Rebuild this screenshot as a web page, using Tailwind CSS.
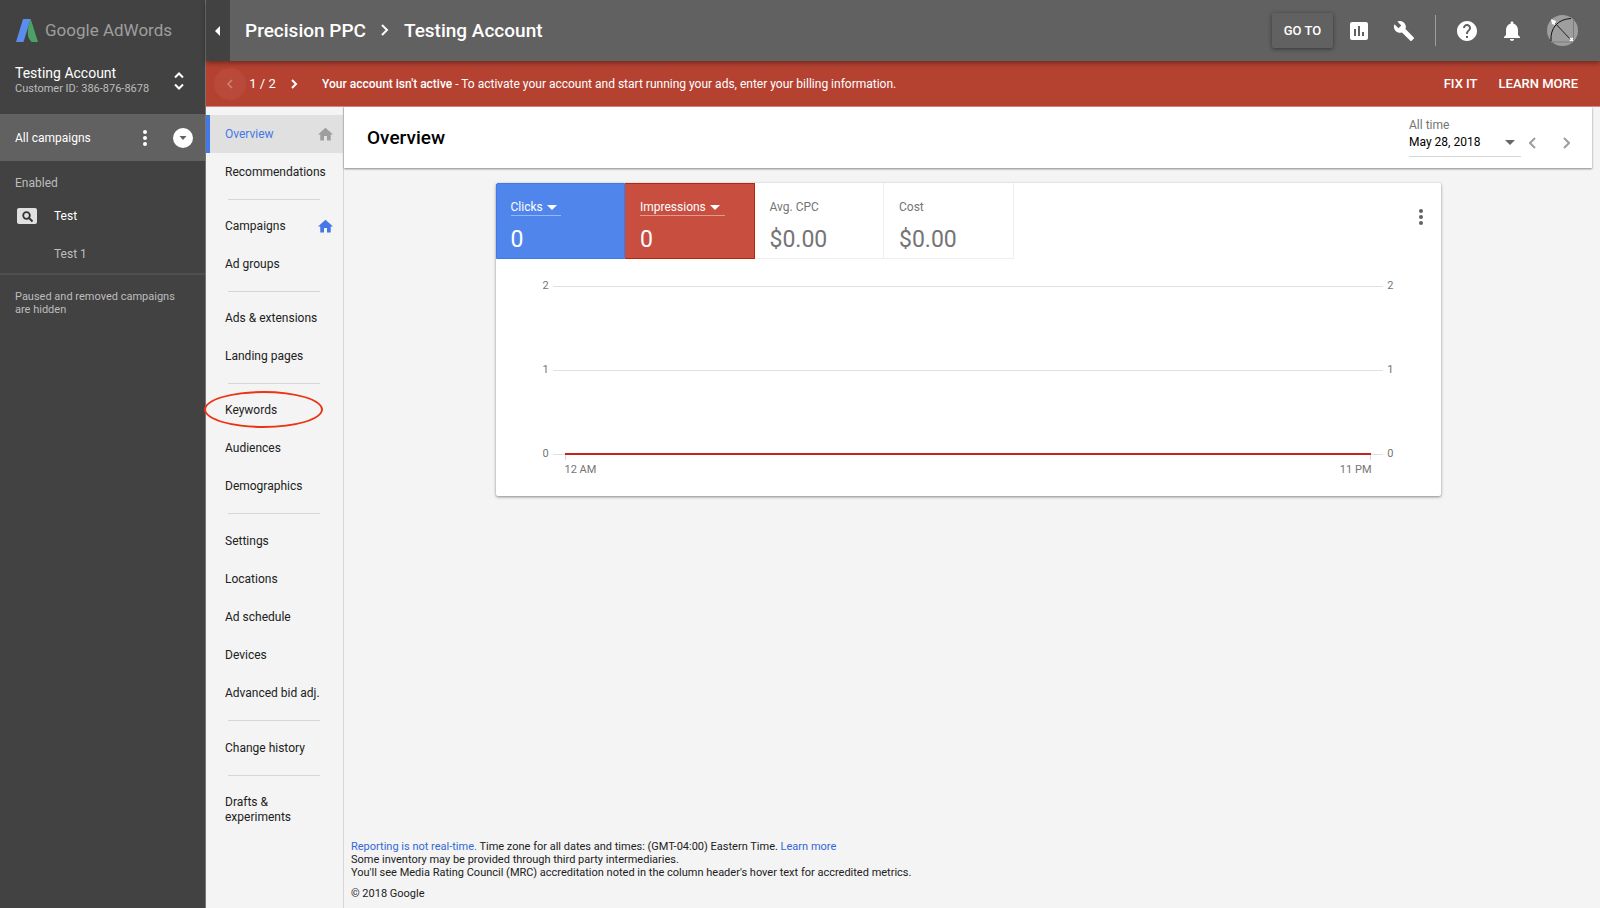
<!DOCTYPE html>
<html lang="en">
<head>
    <meta charset="UTF-8">
    <meta name="viewport" content="width=device-width, initial-scale=1.0">
    <script src="https://cdn.jsdelivr.net/npm/@tailwindcss/browser@4"></script>
    <title>Overview - Testing Account - Google AdWords</title>
</head>
<body class="flex min-h-screen bg-[#f4f4f4] font-['Roboto',sans-serif] text-xs text-[#212121]">

    <!-- Campaign sidebar -->
    <aside class="w-[206px] shrink-0 bg-[#424242] text-xs text-[#bdbdbd] border-r border-[#757575]">
        <a href="#" class="flex items-center gap-[7px] h-[61px] pl-4 text-[17px] text-[#9e9e9e]">
            <svg class="w-[22px] h-[23px]" viewBox="0 0 22 23" aria-hidden="true">
                <path d="M7 0h7.700L7.500 23H0z" fill="#5b8def"/>
                <path d="M12.500 7L14.700 0 22 23h-6.500q-5.500-5-3-16z" fill="#4ca167"/>
            </svg>
            <span>Google AdWords</span>
        </a>
        <div class="flex items-center justify-between h-[53px] pl-[15px] pr-5 pb-[14px]">
            <div>
                <div class="text-sm leading-[17px] text-white">Testing Account</div>
                <div class="text-[11px] leading-[14px]">Customer ID: 386-876-8678</div>
            </div>
            <button type="button" aria-label="Switch account">
                <svg class="w-3 h-[18px]" viewBox="0 0 12 18" fill="none" stroke="#fff" stroke-width="2"><path d="M2 5.500l4-4 4 4M2 12.500l4 4 4-4"/></svg>
            </button>
        </div>
        <div class="flex items-center h-[47px] pl-[15px] pr-3 bg-[#616161] text-white">
            <span class="flex-1">All campaigns</span>
            <button type="button" aria-label="More" class="mr-[26px]">
                <svg class="w-1 h-4" viewBox="0 0 4 16" fill="#fff"><circle cx="2" cy="2" r="2"/><circle cx="2" cy="8" r="2"/><circle cx="2" cy="14" r="2"/></svg>
            </button>
            <button type="button" aria-label="Filter campaigns">
                <svg class="w-5 h-5" viewBox="0 0 20 20"><circle cx="10" cy="10" r="10" fill="#fff"/><path d="M6.500 8h7L10 12z" fill="#616161"/></svg>
            </button>
        </div>
        <div class="pl-[15px] h-9 pt-[14px]">Enabled</div>
        <a href="#" class="flex items-center h-[38px] pl-[17px] gap-[17px] text-white">
            <svg class="w-5 h-4" viewBox="0 0 20 16"><rect width="20" height="16" rx="2" fill="#e0e0e0"/><g fill="none" stroke="#333"><circle cx="9.500" cy="7.500" r="3.300" stroke-width="1.800"/><path d="M12 10l3.500 3.500" stroke-width="2"/></g></svg>
            Test
        </a>
        <a href="#" class="flex items-center h-[38px] pl-[54px]">Test 1</a>
        <p class="border-t-2 border-[#4f4f4f] pl-[15px] pr-5 pt-[15px] text-[11px] leading-[13px]">Paused and removed campaigns are hidden</p>
    </aside>

    <div class="flex flex-col flex-1 min-w-0">
        <!-- Top bar -->
        <header class="relative z-10 flex items-center h-[61px] pr-[22px] bg-[#616161] text-white shadow-[0_2px_5px_rgba(0,0,0,0.4)]">
            <button type="button" aria-label="Collapse menu" class="flex items-center justify-center w-6 h-full pr-px bg-[#424242]">
                <svg class="w-[5px] h-[10px]" viewBox="0 0 5 10" fill="#fff"><path d="M5 0v10L0 5z"/></svg>
            </button>
            <nav class="flex items-center flex-1 pl-[15px] text-[19px] font-medium">
                <a href="#">Precision PPC</a>
                <svg class="w-2 h-3 mx-[15px]" viewBox="0 0 8 12" fill="none" stroke="#fff" stroke-width="2"><path d="M1 1l5 5-5 5"/></svg>
                <a href="#">Testing Account</a>
            </nav>
            <button type="button" class="h-[35px] w-[61px] rounded-xs text-[13px] font-medium shadow-[0_1px_4px_rgba(0,0,0,0.45)]">GO TO</button>
            <button type="button" aria-label="Reports" class="ml-[14px]">
                <svg class="w-6 h-6" viewBox="0 0 24 24" fill="#fff"><path d="M19 3H5c-1.100 0-2 .9-2 2v14c0 1.100.9 2 2 2h14c1.100 0 2-.9 2-2V5c0-1.100-.9-2-2-2zM9 17H7v-7h2v7zm4 0h-2V7h2v10zm4 0h-2v-4h2v4z"/></svg>
            </button>
            <button type="button" aria-label="Tools" class="ml-[22px]">
                <svg class="w-[22px] h-[22px]" viewBox="0 0 24 24" fill="#fff"><path d="M22.700 19l-9.100-9.100c.9-2.300.4-5-1.500-6.900-2-2-5-2.400-7.400-1.300L9 6 6 9 1.600 4.700C.4 7.100.9 10.100 2.900 12.100c1.900 1.900 4.600 2.400 6.900 1.500l9.100 9.100c.4.4 1 .4 1.400 0l2.300-2.300c.5-.4.5-1.100.1-1.400z"/></svg>
            </button>
            <div class="w-px h-[31px] ml-5 bg-[#9e9e9e]"></div>
            <button type="button" aria-label="Help" class="ml-[19px]">
                <svg class="w-6 h-6" viewBox="0 0 24 24" fill="#fff"><path d="M12 2C6.480 2 2 6.480 2 12s4.480 10 10 10 10-4.480 10-10S17.520 2 12 2zm1 17h-2v-2h2v2zm2.070-7.750l-.9.920C13.450 12.900 13 13.500 13 15h-2v-.5c0-1.100.45-2.100 1.170-2.830l1.240-1.260c.37-.36.59-.86.59-1.410 0-1.100-.9-2-2-2s-2 .9-2 2H8c0-2.210 1.790-4 4-4s4 1.790 4 4c0 .88-.36 1.680-.93 2.250z"/></svg>
            </button>
            <button type="button" aria-label="Notifications" class="ml-[21px]">
                <svg class="w-6 h-6" viewBox="0 0 24 24" fill="#fff"><path d="M12 22c1.100 0 2-.9 2-2h-4c0 1.100.9 2 2 2zm6-6v-5c0-3.070-1.640-5.640-4.500-6.320V4c0-.83-.67-1.500-1.500-1.500s-1.500.67-1.500 1.500v.68C7.630 5.360 6 7.920 6 11v5l-2 2v1h16v-1l-2-2z"/></svg>
            </button>
            <button type="button" aria-label="Account" class="ml-[23px]">
                <svg class="w-[31px] h-[31px]" viewBox="0 0 31 31">
                    <circle cx="15.500" cy="15.500" r="15.500" fill="#9e9e9e"/>
                    <path d="M26.500 5v22M4 27h22" stroke="#7c7c7c" fill="none"/>
                    <path d="M4 26C3 13 11 4 24 3.500" stroke="#111" fill="none"/>
                    <path d="M7 7l17 18" stroke="#222" fill="none"/>
                    <path d="M4 4l5 2-1 4-3-1z" fill="#fff"/>
                    <path d="M23 23l3 3m0-3l-3 3" stroke="#fff" stroke-width="1.500"/>
                </svg>
            </button>
        </header>

        <!-- Account alert -->
        <div class="flex items-center h-[46px] pl-2 pr-[22px] bg-[#b54231] text-white border-b border-[#c98b82]">
            <button type="button" aria-label="Previous alert" class="flex items-center justify-center w-8 h-8 rounded-full bg-[#b94a3a]">
                <svg class="w-[6px] h-[10px]" viewBox="0 0 6 10" fill="none" stroke="#d08478" stroke-width="1.500"><path d="M5 1L1 5l4 4"/></svg>
            </button>
            <span class="w-[33px] text-center text-[13px]">1 / 2</span>
            <button type="button" aria-label="Next alert" class="ml-3">
                <svg class="w-[7px] h-[10px]" viewBox="0 0 7 10" fill="none" stroke="#fff" stroke-width="2"><path d="M1 1l4 4-4 4"/></svg>
            </button>
            <p class="flex-1 pl-6"><b class="font-medium">Your account isn't active</b> - To activate your account and start running your ads, enter your billing information.</p>
            <a href="#" class="text-[13px] font-medium">FIX IT</a>
            <a href="#" class="ml-[21px] text-[13px] font-medium">LEARN MORE</a>
        </div>

        <div class="flex flex-1">
            <!-- Page menu -->
            <nav class="w-[138px] shrink-0 pt-2 border-r border-[#d6d6d6]">
                <a href="#" class="flex items-center justify-between h-[38px] pl-[15px] pr-[10px] border-l-4 border-[#4478e6] bg-[#e0e0e0] text-[#4478e6]">
                    Overview
                    <svg class="w-[15px] h-[15px]" viewBox="2 3 20 18" fill="#9e9e9e" aria-hidden="true"><path d="M10 20v-6h4v6h5v-8h3L12 3 2 12h3v8z"/></svg>
                </a>
                <a href="#" class="flex items-center h-[38px] pl-[19px]">Recommendations</a>
                <hr class="mt-2 mb-[7px] ml-[22px] mr-[23px] border-[#d6d6d6]">
                <a href="#" class="flex items-center justify-between h-[38px] pl-[19px] pr-[10px]">
                    Campaigns
                    <svg class="w-[15px] h-[15px]" viewBox="2 3 20 18" fill="#4478e6" aria-hidden="true"><path d="M10 20v-6h4v6h5v-8h3L12 3 2 12h3v8z"/></svg>
                </a>
                <a href="#" class="flex items-center h-[38px] pl-[19px]">Ad groups</a>
                <hr class="mt-2 mb-[7px] ml-[22px] mr-[23px] border-[#d6d6d6]">
                <a href="#" class="flex items-center h-[38px] pl-[19px]">Ads &amp; extensions</a>
                <a href="#" class="flex items-center h-[38px] pl-[19px]">Landing pages</a>
                <hr class="mt-2 mb-[7px] ml-[22px] mr-[23px] border-[#d6d6d6]">
                <a href="#" class="relative flex items-center h-[38px] pl-[19px]">
                    Keywords
                    <span class="absolute top-0 -left-0.5 w-[119px] h-[37px] rounded-[50%] border-2 border-[#ec3312]"></span>
                </a>
                <a href="#" class="flex items-center h-[38px] pl-[19px]">Audiences</a>
                <a href="#" class="flex items-center h-[38px] pl-[19px]">Demographics</a>
                <hr class="my-2 ml-[22px] mr-[23px] border-[#d6d6d6]">
                <a href="#" class="flex items-center h-[38px] pl-[19px]">Settings</a>
                <a href="#" class="flex items-center h-[38px] pl-[19px]">Locations</a>
                <a href="#" class="flex items-center h-[38px] pl-[19px]">Ad schedule</a>
                <a href="#" class="flex items-center h-[38px] pl-[19px]">Devices</a>
                <a href="#" class="flex items-center h-[38px] pl-[19px]">Advanced bid adj.</a>
                <hr class="my-2 ml-[22px] mr-[23px] border-[#d6d6d6]">
                <a href="#" class="flex items-center h-[38px] pl-[19px]">Change history</a>
                <hr class="my-2 ml-[22px] mr-[23px] border-[#d6d6d6]">
                <a href="#" class="block pl-[19px] pr-8 pt-[11px] leading-[15px]">Drafts &amp; experiments</a>
            </nav>

            <main class="flex flex-col flex-1 min-w-0 pr-2">
                <div class="flex items-center h-[61px] pl-[23px] pr-[22px] bg-white shadow-[0_1px_2px_rgba(0,0,0,0.45)]">
                    <h1 class="flex-1 text-[19px] font-medium text-black">Overview</h1>
                    <div class="w-[112px] border-b border-[#d6d6d6]">
                        <div class="leading-[14px] text-[#757575]">All time</div>
                        <button type="button" class="flex items-center justify-between w-full h-6 pr-[6px] pb-1 text-black">
                            May 28, 2018
                            <svg class="w-[10px] h-[5px]" viewBox="0 0 10 5" fill="#666"><path d="M0 0h10L5 5z"/></svg>
                        </button>
                    </div>
                    <button type="button" aria-label="Previous period" class="ml-2 mt-[10px]">
                        <svg class="w-[7px] h-3" viewBox="0 0 7 12" fill="none" stroke="#9e9e9e" stroke-width="2"><path d="M6 1L1 6l5 5"/></svg>
                    </button>
                    <button type="button" aria-label="Next period" class="ml-[27px] mt-[10px]">
                        <svg class="w-[7px] h-3" viewBox="0 0 7 12" fill="none" stroke="#9e9e9e" stroke-width="2"><path d="M1 1l5 5-5 5"/></svg>
                    </button>
                </div>

                <!-- Metrics card -->
                <section class="w-full max-w-[945px] mx-auto mt-[15px] pb-[19px] bg-white rounded-xs text-[#757575] shadow-[0_1px_3px_rgba(0,0,0,0.45)]">
                    <div class="flex items-start justify-between pr-[18px]">
                        <div class="grid grid-cols-4 w-[518px] h-[76px]">
                            <div class="pl-[14px] pt-[15px] rounded-tl-xs border border-[#4079ea] bg-[#5086ec] text-white">
                                <button type="button" class="flex items-center gap-1 h-[17px] w-[50px] border-b border-[#96b6f4]">Clicks
                                    <svg class="w-[10px] h-[5px]" viewBox="0 0 10 5" fill="#fff"><path d="M0 0h10L5 5z"/></svg>
                                </button>
                                <div class="mt-2 text-[23px] leading-8">0</div>
                            </div>
                            <div class="pl-[15px] pt-[15px] border-y border-r border-[#b7260b] bg-[#c84e40] text-white">
                                <button type="button" class="flex items-center gap-1 h-[17px] w-[85px] border-b border-[#e09a92]">Impressions
                                    <svg class="w-[10px] h-[5px]" viewBox="0 0 10 5" fill="#fff"><path d="M0 0h10L5 5z"/></svg>
                                </button>
                                <div class="mt-2 text-[23px] leading-8">0</div>
                            </div>
                            <div class="pl-[15px] pt-4 border-r border-b border-[#eee]">
                                <div class="h-[17px]">Avg. CPC</div>
                                <div class="mt-2 text-[23px] leading-8">$0.00</div>
                            </div>
                            <div class="pl-[15px] pt-4 border-r border-b border-[#eee]">
                                <div class="h-[17px]">Cost</div>
                                <div class="mt-2 text-[23px] leading-8">$0.00</div>
                            </div>
                        </div>
                        <button type="button" aria-label="Card options" class="mt-[26px]">
                            <svg class="w-1 h-4" viewBox="0 0 4 16" fill="#616161"><circle cx="2" cy="2" r="2"/><circle cx="2" cy="8" r="2"/><circle cx="2" cy="14" r="2"/></svg>
                        </button>
                    </div>

                    <div class="px-[47px] pt-5 text-[11px]">
                        <div class="flex flex-col gap-[70px] leading-[14px]">
                            <div class="flex items-center gap-1">
                                <span>2</span><span class="flex-1 h-px bg-[#e0e0e0]"></span><span>2</span>
                            </div>
                            <div class="flex items-center gap-1">
                                <span>1</span><span class="flex-1 h-px bg-[#e0e0e0]"></span><span>1</span>
                            </div>
                            <div class="flex items-center gap-1">
                                <span>0</span>
                                <span class="relative flex-1 h-px bg-[#e0e0e0]">
                                    <span class="absolute top-0 inset-x-3 h-[6px] border-x border-[#d6d6d6]"></span>
                                    <span class="absolute -top-px inset-x-3 h-[2px] bg-[#c5221f]"></span>
                                </span>
                                <span>0</span>
                            </div>
                        </div>
                        <div class="flex justify-between px-[22px] pt-[2px] leading-[14px]">
                            <span>12 AM</span>
                            <span>11 PM</span>
                        </div>
                    </div>
                </section>

                <footer class="mt-auto pl-[7px] pb-2 text-[11px] leading-[13px]">
                    <p><a href="#" class="text-[#3367d6]">Reporting is not real-time.</a> Time zone for all dates and times: (GMT-04:00) Eastern Time. <a href="#" class="text-[#3367d6]">Learn more</a></p>
                    <p>Some inventory may be provided through third party intermediaries.</p>
                    <p>You'll see Media Rating Council (MRC) accreditation noted in the column header's hover text for accredited metrics.</p>
                    <p class="mt-2">© 2018 Google</p>
                </footer>
            </main>
        </div>
    </div>
</body>
</html>
